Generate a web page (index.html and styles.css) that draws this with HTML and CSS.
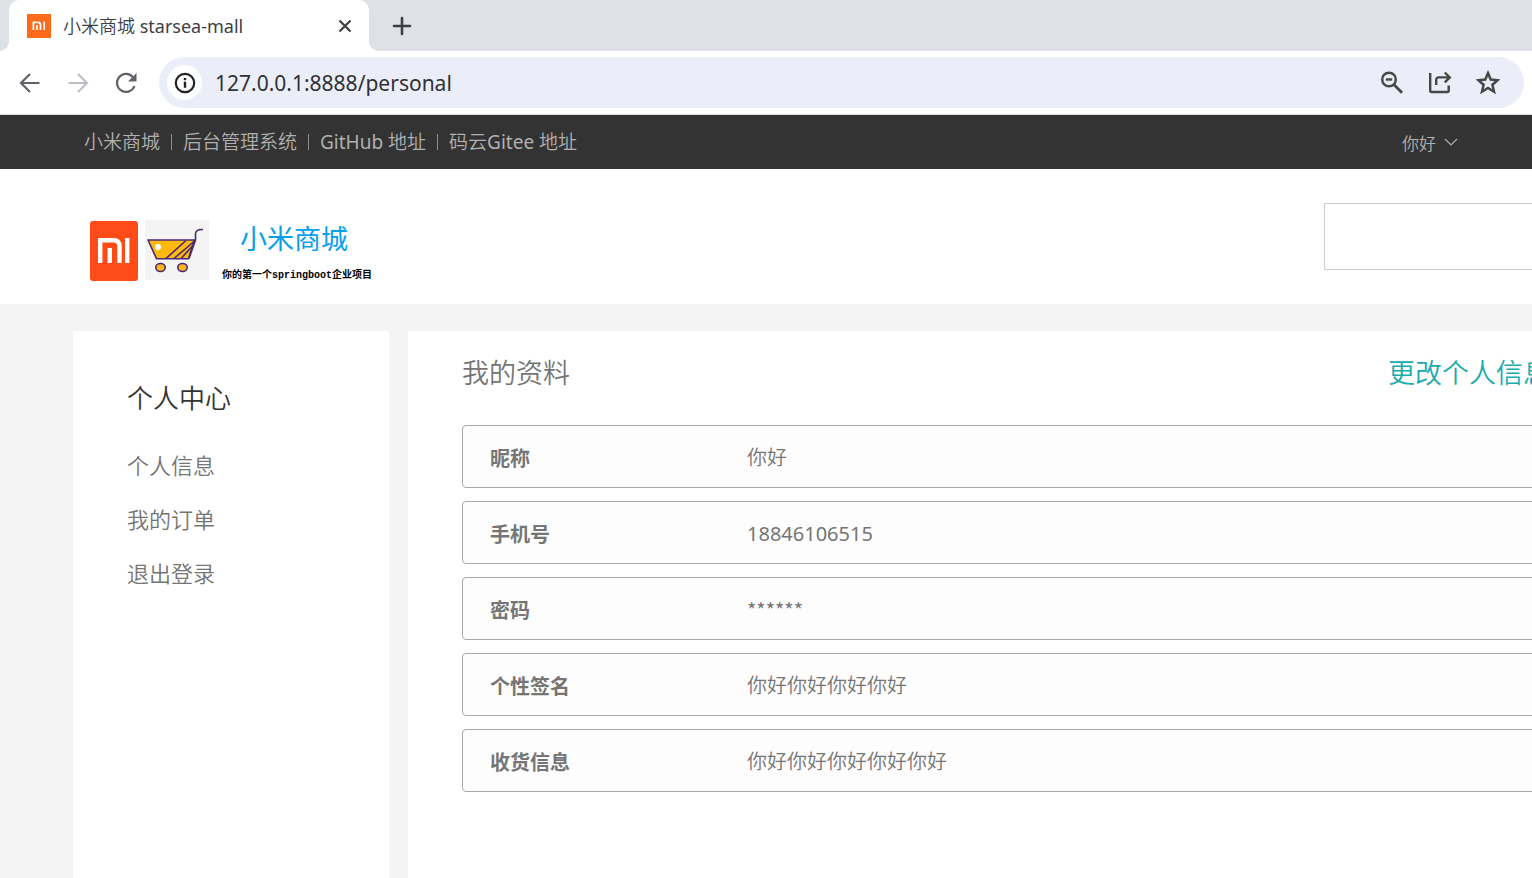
FILE: index.html
```html
<!DOCTYPE html>
<html lang="zh-CN">
<head>
<meta charset="utf-8">
<title>小米商城 starsea-mall</title>
<link rel="stylesheet" href="styles.css">
</head>
<body>
<div class="tabstrip">
  <div class="tab">
    <svg class="favicon" viewBox="0 0 24 24" aria-hidden="true"><path fill="#ff6a1a" d="M0 0h24v24H0z"/><path fill="none" stroke="#fff" stroke-width="1.7" d="M6.4 16V8.3h4.6q2.5 0 2.5 2.5V16M10 11v5M17.2 7.5V16"/></svg>
    <span class="tab-title">小米商城 starsea-mall</span>
    <button class="icon-btn tab-close" aria-label="关闭"><svg width="14" height="14" viewBox="0 0 14 14"><path fill="none" stroke="#3c4043" stroke-width="2.2" d="M1.5 1.5l11 11M12.5 1.5l-11 11"/></svg></button>
  </div>
  <button class="icon-btn new-tab" aria-label="新标签页"><svg width="20" height="20" viewBox="0 0 20 20"><path fill="none" stroke="#3c4043" stroke-width="2.6" stroke-linecap="round" d="M10 2v16M2 10h16"/></svg></button>
</div>
<div class="toolbar">
  <div class="nav-buttons">
    <button class="icon-btn" aria-label="后退"><svg width="24" height="24" viewBox="0 0 24 24"><path fill="none" stroke="#5f6368" stroke-width="2.2" d="M21.5 12H3.5M12 3l-9 9 9 9"/></svg></button>
    <button class="icon-btn" aria-label="前进"><svg width="24" height="24" viewBox="0 0 24 24"><path fill="none" stroke="#bdc1c6" stroke-width="2.2" d="M2.5 12h18M12 3l9 9-9 9"/></svg></button>
    <button class="icon-btn" aria-label="刷新"><svg width="24" height="24" viewBox="0 0 24 24"><path fill="none" stroke="#5f6368" stroke-width="2.2" d="M20.5 15A9 9 0 1 1 18.800 6"/><path fill="#5f6368" d="M22.500 2v8.500H14z"/></svg></button>
  </div>
  <div class="omnibox">
    <button class="icon-btn site-info" aria-label="网站信息"><svg width="22" height="22" viewBox="0 0 22 22"><circle cx="11" cy="11" r="9.2" fill="none" stroke="#202124" stroke-width="2.2"/><path fill="#202124" d="M9.8 9.8h2.4v6H9.8zM9.8 6h2.4v2.300H9.8z"/></svg></button>
    <input class="url" type="text" aria-label="地址" value="127.0.0.1:8888/personal">
    <div class="omni-actions">
      <button class="icon-btn" aria-label="缩放"><svg width="24" height="24" viewBox="0 0 24 24"><g fill="none" stroke="#474747" stroke-width="2.4"><circle cx="9" cy="8.500" r="6.800"/><path d="M5.800 8.500h6.400"/><path stroke-width="2.800" d="M13.800 13.500l8.200 8.200"/></g></svg></button>
      <button class="icon-btn" aria-label="分享"><svg width="24" height="24" viewBox="0 0 24 24"><g fill="none" stroke="#474747" stroke-width="2.4"><path d="M2.200 2v17.500q0 1.500 1.500 1.500h15.500q1.500 0 1.500-1.500V14.500"/><path d="M8.200 14V9q0-2.600 2.600-2.600H21M16.800 1.500l5 4.900-5 5"/></g></svg></button>
      <button class="icon-btn" aria-label="收藏"><svg width="24" height="26" viewBox="1 0 24 26"><path fill="none" stroke="#474747" stroke-width="2.500" d="M13 3.100l2.700 6.500 7 .6-5.300 4.600 1.600 6.900-6-3.700-6 3.700 1.600-6.900-5.300-4.600 7-.6z"/></svg></button>
    </div>
  </div>
</div>
<div class="site">
  <nav class="topbar">
    <div class="topbar-links">
      <a href="#">小米商城</a><a href="#">后台管理系统</a><a href="#">GitHub 地址</a><a href="#">码云Gitee 地址</a>
    </div>
    <button class="user-menu">你好 <svg width="14" height="9" viewBox="0 0 14 9" aria-hidden="true"><path fill="none" stroke="#b0b0b0" stroke-width="1.2" d="M1 1l6 6 6-6"/></svg></button>
  </nav>
  <header class="site-header">
    <a class="brand" href="#">
      <svg class="brand-mi" viewBox="0 0 50 62" aria-hidden="true"><rect x="1" y="1" width="48" height="60" rx="3" fill="#ff4b17"/><path fill="none" stroke="#fff" stroke-width="4.4" d="M11.200 43V20.200h13.300q6 0 6 6V43M20.800 28v15M38.200 18v25"/></svg>
      <svg class="brand-cart" viewBox="0 0 64 60" aria-hidden="true"><path fill="#f4f4f4" d="M0 0h64v60H0z"/><path fill="#ffb80c" stroke="#48287c" stroke-width="1.6" stroke-linejoin="round" d="M3 20h46.500l-6 18.700h-32z"/><path fill="none" stroke="#48287c" stroke-width="1.6" d="M58 9.500q-7-.5-7.500 4V20L44 38.500M21 38.500L41 20.500M29 38.500l20-17M36 38.500l12-13"/><circle cx="13" cy="27" r="3" fill="#fff"/><g fill="#ffb80c" stroke="#48287c" stroke-width="1.6"><ellipse cx="15.500" cy="47.500" rx="4.700" ry="4"/><ellipse cx="37.500" cy="47.500" rx="4.700" ry="4"/></g></svg>
      <span class="brand-text"><strong class="brand-name">小米商城</strong><span class="brand-slogan">你的第一个springboot企业项目</span></span>
    </a>
    <input class="search" type="search" aria-label="搜索">
  </header>
  <main class="content">
    <aside class="sidebar">
      <h2>个人中心</h2>
      <ul><li><a href="#">个人信息</a></li><li><a href="#">我的订单</a></li><li><a href="#">退出登录</a></li></ul>
    </aside>
    <section class="panel">
      <div class="panel-head"><h1>我的资料</h1><a href="#">更改个人信息</a></div>
      <dl class="profile">
        <div class="row"><dt>昵称</dt><dd>你好</dd></div>
        <div class="row"><dt>手机号</dt><dd>18846106515</dd></div>
        <div class="row"><dt>密码</dt><dd class="masked">******</dd></div>
        <div class="row"><dt>个性签名</dt><dd>你好你好你好你好</dd></div>
        <div class="row"><dt>收货信息</dt><dd>你好你好你好你好你好</dd></div>
      </dl>
    </section>
  </main>
</div>
</body>
</html>
```
FILE: styles.css
```css
* { box-sizing: border-box; }
body {
  margin: 0;
  min-height: 100vh;
  display: flex;
  flex-direction: column;
  overflow: hidden;
  background: #f4f4f4;
  color: #757575;
  font-family: "Noto Sans", "Noto Sans CJK SC DemiLight", "Noto Sans CJK SC Light", "Noto Sans CJK SC", sans-serif;
}
a { color: inherit; text-decoration: none; }
h1, h2, ul, dl, dd { margin: 0; padding: 0; font-weight: 400; }
ul { list-style: none; }
svg { display: block; flex: none; }
button, input { font-family: inherit; }
.icon-btn { display: grid; place-items: center; padding: 0; border: 0; background: none; }

.tabstrip { display: flex; height: 51px; padding-left: 9px; background: #dee1e6; }
.tab {
  position: relative;
  display: flex;
  align-items: center;
  width: 360px;
  padding: 0 17px 0 18px;
  border-radius: 10px 10px 0 0;
  background: #fff;
}
.tab::before, .tab::after {
  content: "";
  position: absolute;
  bottom: 0;
  width: 10px;
  height: 10px;
}
.tab::before { right: 100%; background: radial-gradient(circle at 0 0, #dee1e6 10px, #fff 10px); }
.tab::after { left: 100%; background: radial-gradient(circle at 100% 0, #dee1e6 10px, #fff 10px); }
.favicon { width: 24px; height: 24px; }
.tab-title { flex: 1; margin-left: 12px; color: #3c4043; font-size: 18px; line-height: 24px; }
.new-tab { margin-left: 23px; }

.toolbar {
  display: flex;
  align-items: center;
  height: 64px;
  padding: 0 8px 0 18px;
  border-bottom: 1px solid #dadce0;
  background: #fff;
}
.nav-buttons { display: flex; gap: 24px; }
.omnibox {
  flex: 1;
  display: flex;
  align-items: center;
  height: 51px;
  margin-left: 21px;
  padding: 0 24px 0 8px;
  border-radius: 26px;
  background: #ebeef8;
}
.site-info { width: 35px; height: 35px; border-radius: 50%; background: #fff; }
.url {
  flex: 1;
  margin-left: 13px;
  padding: 0;
  border: 0;
  background: none;
  color: #303134;
  font-size: 21px;
  line-height: 28px;
}
.omni-actions { display: flex; align-items: center; gap: 24px; }

.site { flex: 1; display: flex; flex-direction: column; }
.topbar {
  display: flex;
  align-items: center;
  justify-content: space-between;
  height: 54px;
  padding: 0 74px 0 84px;
  background: #333;
  color: #b0b0b0;
  font-size: 19px;
}
.topbar-links { display: flex; align-items: center; line-height: 28px; }
.topbar-links a { display: flex; align-items: center; }
.topbar-links a + a::before { content: ""; width: 1px; height: 16px; margin: 0 11px; background: #8c8c8c; }
.user-menu {
  display: flex;
  align-items: center;
  gap: 8px;
  padding: 0;
  border: 0;
  background: none;
  color: inherit;
  font-size: 17px;
}
.site-header {
  display: flex;
  align-items: flex-start;
  justify-content: space-between;
  height: 135px;
  margin-right: -72px;
  padding: 34px 0 0 89px;
  background: #fff;
}
.brand { display: flex; margin-top: 17px; }
.brand-mi { width: 50px; height: 62px; }
.brand-cart { width: 64px; height: 60px; margin-left: 6px; }
.brand-text { display: flex; flex-direction: column; margin-left: 13px; }
.brand-name {
  padding-left: 18px;
  color: #079fec;
  font-family: "Noto Sans CJK SC", sans-serif;
  font-size: 27px;
  font-weight: 400;
  line-height: 36px;
}
.brand-slogan {
  margin-top: 12px;
  color: #000;
  font-family: "Liberation Mono", "Noto Sans CJK SC", monospace;
  font-size: 10px;
  font-weight: 700;
  line-height: 16px;
}
.search { width: 280px; height: 67px; border: 1px solid #ccc; background: #fff; font-size: 20px; }
.content {
  flex: 1;
  display: flex;
  gap: 19px;
  margin-right: -72px;
  padding: 27px 0 0 73px;
}
.sidebar { width: 316px; padding: 47px 54px; background: #fff; }
.sidebar h2 { color: #333; font-size: 26px; line-height: 40px; }
.sidebar ul { margin-top: 20px; font-size: 22px; line-height: 54px; }
.panel { flex: 1; padding: 22px 54px; background: #fff; }
.panel-head { display: flex; justify-content: space-between; font-size: 27px; line-height: 40px; }
.panel-head h1 { font-size: 27px; }
.panel-head a { color: #1aabab; }
.profile { display: grid; gap: 13px; margin: 32px -54px 0 0; }
.row {
  display: grid;
  grid-template-columns: 257px 1fr;
  align-items: center;
  height: 63px;
  padding: 2px 27px 0;
  border: 1px solid #a9a9a9;
  border-radius: 4px;
  background: #fdfdfd;
  font-size: 20px;
  line-height: 30px;
}
.row dt { font-family: "Noto Sans CJK SC", sans-serif; font-weight: 700; }
.masked { font-family: "Noto Sans CJK SC", sans-serif; }
```
